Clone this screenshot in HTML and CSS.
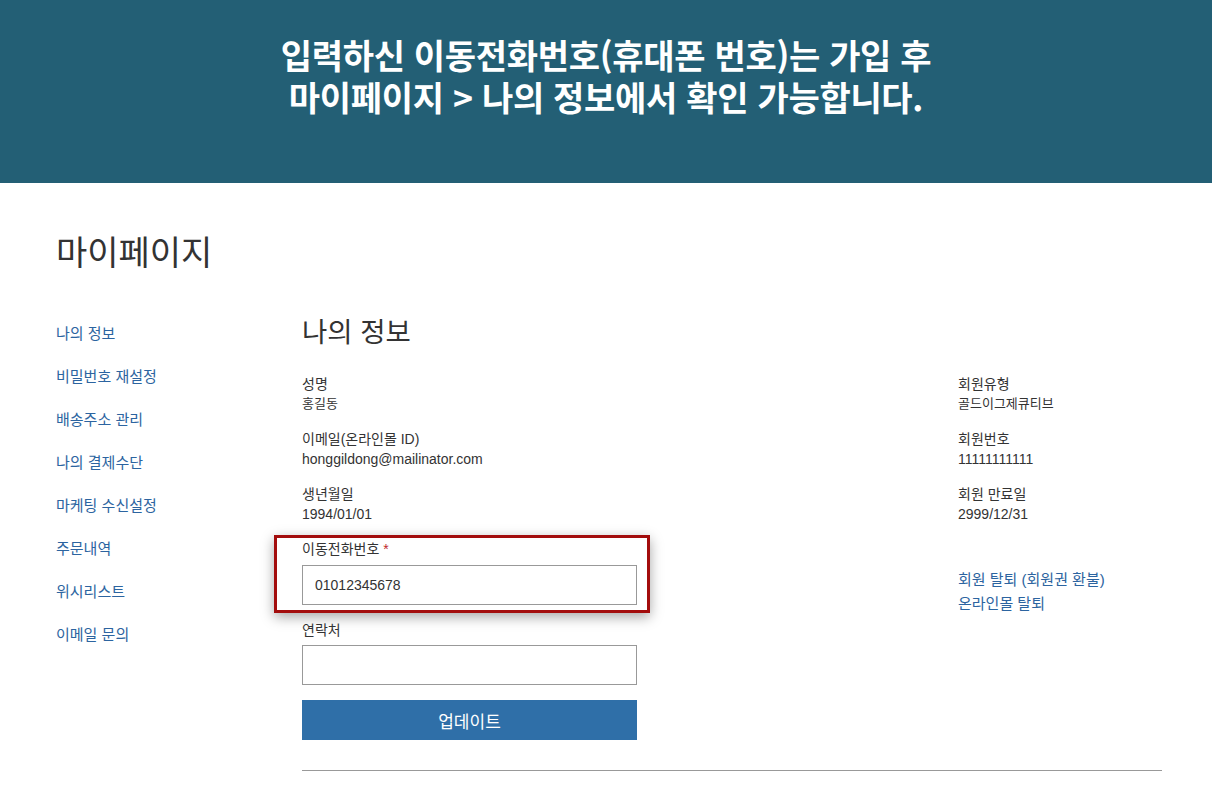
FILE: index.html
```html
<!DOCTYPE html>
<html lang="ko">
<head>
<meta charset="utf-8">
<title>마이페이지</title>
<link rel="stylesheet" href="styles.css">
</head>
<body>
<header class="banner">
  <p>입력하신 이동전화번호(휴대폰 번호)는 가입 후<br>마이페이지 &gt; 나의 정보에서 확인 가능합니다.</p>
</header>
<div class="page">
  <h1 class="page-title">마이페이지</h1>
  <div class="layout">
    <nav class="side-nav">
      <a href="#">나의 정보</a>
      <a href="#">비밀번호 재설정</a>
      <a href="#">배송주소 관리</a>
      <a href="#">나의 결제수단</a>
      <a href="#">마케팅 수신설정</a>
      <a href="#">주문내역</a>
      <a href="#">위시리스트</a>
      <a href="#">이메일 문의</a>
    </nav>
    <main class="main">
      <h2 class="section-title">나의 정보</h2>
      <div class="columns">
        <div class="col-left">
          <div class="info"><div class="label">성명</div><div class="value">홍길동</div></div>
          <div class="info"><div class="label">이메일(온라인몰 ID)</div><div class="value latin">honggildong@mailinator.com</div></div>
          <div class="info"><div class="label">생년월일</div><div class="value latin">1994/01/01</div></div>
          <div class="field highlight">
            <label class="label">이동전화번호 <span class="req">*</span></label>
            <input class="input" type="text" value="01012345678">
          </div>
          <div class="field">
            <label class="label">연락처</label>
            <input class="input" type="text" value="">
          </div>
          <button class="btn">업데이트</button>
        </div>
        <div class="col-right">
          <div class="info"><div class="label">회원유형</div><div class="value">골드이그제큐티브</div></div>
          <div class="info"><div class="label">회원번호</div><div class="value latin">11111111111</div></div>
          <div class="info"><div class="label">회원 만료일</div><div class="value latin">2999/12/31</div></div>
          <div class="links">
            <a href="#">회원 탈퇴 (회원권 환불)</a>
            <a href="#">온라인몰 탈퇴</a>
          </div>
        </div>
      </div>
      <hr class="divider">
    </main>
  </div>
</div>
</body>
</html>
```

FILE: styles.css
```css
* { box-sizing: border-box; }
html, body { margin: 0; padding: 0; background: #fff; }
body {
  font-family: "Liberation Sans", "Noto Sans CJK KR", sans-serif;
  color: #333;
}
.banner {
  height: 183px;
  background: #235f75;
  padding-top: 34px;
  text-align: center;
}
.banner p {
  margin: 0;
  color: #fff;
  font-family: "Noto Sans CJK KR", sans-serif;
  font-weight: 700;
  font-size: 34px;
  line-height: 42px;
  letter-spacing: -0.3px;
}
.page { padding: 0 50px 0 56px; }
.page-title {
  margin: 48px 0 0;
  font-family: "Noto Sans CJK KR", sans-serif;
  font-weight: 400;
  font-size: 34px;
  line-height: 40px;
  color: #333;
}
.layout {
  display: flex;
  margin-top: 42px;
}
.side-nav {
  width: 246px;
  flex: none;
  display: flex;
  flex-direction: column;
  gap: 23px;
  padding-top: 10px;
}
.side-nav a {
  font-family: "Noto Sans CJK KR", sans-serif;
  font-size: 15px;
  line-height: 20px;
  color: #2c64a0;
  text-decoration: none;
}
.main { flex: 1; }
.section-title {
  margin: 0 0 27px;
  font-family: "Noto Sans CJK KR", sans-serif;
  font-weight: 400;
  font-size: 27.5px;
  line-height: 34px;
  color: #333;
}
.columns {
  display: flex;
  justify-content: space-between;
}
.col-left { width: 335px; }
.col-right { width: 204px; }
.info { margin-bottom: 15px; }
.label {
  display: block;
  font-size: 14px;
  line-height: 20px;
  color: #333;
}
.value {
  font-size: 13px;
  line-height: 20px;
  color: #333;
}
.value.latin { font-size: 14px; }
.req { color: #c0282d; }
.highlight {
  margin: -4px -13px 0 -28px;
  padding: 1px 10px 5px 25px;
  border: 3px solid #a30d0d;
  box-shadow: 0 4px 12px rgba(0,0,0,0.35);
  background: #fff;
}
.highlight .label { margin-bottom: 6px; }
.field + .field { margin-top: 7px; }
.field + .field .label { margin-bottom: 5px; }
.input {
  display: block;
  width: 100%;
  height: 40px;
  border: 1px solid #999;
  padding: 0 12px;
  font-family: "Liberation Sans", sans-serif;
  font-size: 14px;
  color: #333;
  background: #fff;
  outline: none;
}
.btn {
  display: block;
  width: 100%;
  height: 40px;
  margin-top: 15px;
  border: 0;
  background: #2f6fa8;
  color: #fff;
  font-family: "Noto Sans CJK KR", sans-serif;
  font-size: 17px;
}
.links {
  margin-top: 44px;
  display: flex;
  flex-direction: column;
}
.links a {
  font-size: 15px;
  line-height: 24px;
  color: #2c64a0;
  text-decoration: none;
}
.divider {
  margin: 30px 0 0;
  border: 0;
  border-top: 1px solid #999;
}
```
